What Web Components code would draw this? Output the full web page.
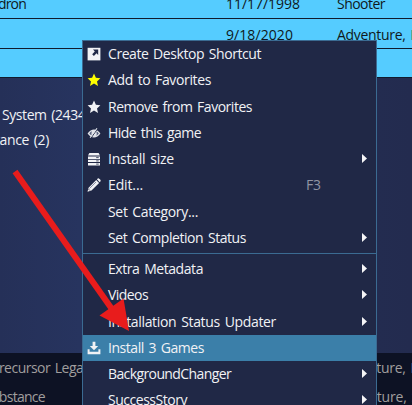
<!DOCTYPE html>
<html lang="en"><head><meta charset="utf-8"><title>Game library</title>
<style>body{margin:0;overflow:hidden;background:#253059}</style></head><body>
<library-app></library-app>
<script>
class FitText extends HTMLElement{
  constructor(){super();this.attachShadow({mode:'open'}).innerHTML=`<style>:host{display:block;white-space:pre;line-height:20px;flex:none;word-spacing:1.5px}span{display:inline-block}</style><span><slot></slot></span>`}
  connectedCallback(){
    const w=+this.getAttribute('w'),s=this.shadowRoot.querySelector('span');
    if(!w)return;
    const n=this.textContent.length,m=s.getBoundingClientRect().width;
    s.style.letterSpacing=((w-m)/n)+'px';
    this.style.width=w+'px';
  }
}
const star='<path d="M7 .4 8.9 4.8 13.4 5.3 10 8.4 11 13 7 10.6 3 13 4 8.4 .6 5.3 5.1 4.8Z" fill="currentColor"/>';
const icons={
 shortcut:'<path d="M.6 .8h12.8v12.6H.6z" fill="#f1f2f5"/><path d="M6 2.6h5.2v5.3L9.5 6.3 6.9 8.9 5.2 7.3 7.8 4.6Z" fill="#202846"/>',
 star,
 hide:'<path d="M.6 7.5Q3.5 3.4 7 3.4T13.4 7.5Q10.5 11.5 7 11.5T.6 7.5Z" fill="#e2e4ea"/><path d="M2.4 7.5Q3.4 5.8 4.8 5.2 4 7.6 5 9.6 3.3 9 2.4 7.5ZM9.3 5.2Q11 6 11.8 7.5 10.8 9 9.2 9.7 10.2 7.5 9.3 5.2Z" fill="#56607e"/><path d="M3.9 12.2 10.8 2.4" stroke="#202846" stroke-width="1"/><path d="M3.1 11.8 10 2.3" stroke="#e2e4ea" stroke-width="1.1"/>',
 server:'<path d="M2.4 1h9.2L13 3.6H1Z" fill="#f1f2f5"/><path d="M1 4.4h12v2.5H1zM1 7.7h12v2.4H1zM1 10.9h12v2.5H1z" fill="#f1f2f5"/><path d="M9.2 5.6h2.5M9.2 8.9h2.5M9.2 12.1h2.5" stroke="#202846" stroke-width=".8"/>',
 edit:'<path d="M.5 13.7 1.6 9.7 9.2 2 12.1 4.9 4.5 12.6ZM9.9 1.3 10.8.4Q11.6 0 12.5.9L13.4 1.8Q14 2.6 13.4 3.4L12.7 4.2Z" fill="#f1f2f5"/><path d="M2.6 10.4 9 4" stroke="#717994" stroke-width=".8"/><path d="M1.6 11.2l1.3 1.3" stroke="#202846" stroke-width=".8"/>',
 install:'<path d="M5.6 .8h2.8v4.2h2.8L7 9.2 2.8 5h2.8ZM.6 8.3h2V10.8h8.8V8.3h2v4.9H.6Z" fill="#f1f2f5"/>'
};
class MenuIcon extends HTMLElement{
  connectedCallback(){this.attachShadow({mode:'open'}).innerHTML=`<style>:host{display:block;width:14px;height:14px}svg{display:block}</style><svg width="14" height="14" viewBox="0 0 14 14">${icons[this.getAttribute('name')]||''}</svg>`}
}
class MenuItem extends HTMLElement{
  connectedCallback(){
    const a=n=>this.getAttribute(n);
    this.attachShadow({mode:'open'}).innerHTML=`<style>:host{display:grid;grid-template-columns:14px minmax(0,1fr) 14px 5px;align-items:center;box-sizing:border-box;height:26.25px;padding:0 9px 0 4px}
    :host([active]){background:#3b7fa9}fit-text{margin-left:7px;font-weight:500}.key{color:#9095a5;margin-left:-42px;font-weight:400}.tri{display:block;margin-bottom:1px}</style>
    <menu-icon name="${a('icon')||''}" style="color:${a('tint')||'#f1f2f5'}"></menu-icon><fit-text w="${a('w')}">${a('label')}</fit-text>
    <span>${a('key')?`<fit-text class="key" w="15">${a('key')}</fit-text>`:''}</span>${a('sub')!==null?'<svg class="tri" width="5" height="9" viewBox="0 0 5 9"><path d="M0 0 5 4.5 0 9Z" fill="#f5f5f7"/></svg>':''}`;
  }
}
class ContextMenu extends HTMLElement{
  constructor(){super();this.attachShadow({mode:'open'}).innerHTML=`<style>:host{display:block;box-sizing:border-box;background:#202846;border:1px solid #3b6b92;color:#f1f2f5}</style><slot></slot>`}
}
class MenuRule extends HTMLElement{
  constructor(){super();this.attachShadow({mode:'open'}).innerHTML='<style>:host{display:block;height:1px;background:#3b6b92;margin:2px 0 2px}</style>'}
}
class GameRow extends HTMLElement{
  connectedCallback(){
    const a=n=>this.getAttribute(n)||'';
    this.attachShadow({mode:'open'}).innerHTML=`<style>:host{display:grid;grid-template:100% / 226px 111px 75px;align-items:center;box-sizing:border-box;overflow:hidden}fit-text{justify-self:start}.n{margin-left:${a('shift')||0}px}</style>
    <fit-text class="n" w="${a('nw')}">${a('name')}</fit-text><fit-text w="${a('dw')}">${a('date')}</fit-text><fit-text w="${a('gw')}">${a('genre')}</fit-text>`;
  }
}
class LibraryApp extends HTMLElement{
  connectedCallback(){this.attachShadow({mode:'open'}).innerHTML=`<style>
  :host{display:flex;flex-direction:column;position:relative;width:412px;height:405px;overflow:hidden;font:14px "Open Sans","Noto Sans",sans-serif;background:#232c50}
  .list{color:#101820;flex:none}.list game-row{background:#55ccff;border-bottom:1px solid #101b2d}
  .r1{height:19px;padding-bottom:10px}.r2{height:30px;padding-top:2px}.r3{height:29px}
  .detail{flex:none;height:275px;background:linear-gradient(90deg,#253058 0,#27345f 80px,#232c50 377px,#232b4f);color:#f1f2f5;display:flex;flex-direction:column;gap:5px;padding-top:27px;box-sizing:border-box}
  .d1{margin-left:2px}.d2{margin-left:-5px}
  .dim{background:#0d1224;color:#a09e9e;height:52px}.dim game-row{height:29px}
  context-menu{position:absolute;left:82px;top:40px;width:295px;height:400px}
  .arrow{position:absolute;left:0;top:0}
  </style>
  <div class="list"><game-row class="r1" name="adron" shift="-9" nw="35" date="11/17/1998" dw="74" genre="Shooter" gw="48"></game-row><game-row class="r2" date="9/18/2020" dw="67" genre="Adventure, I" gw="77"></game-row><game-row class="r3"></game-row></div>
  <div class="detail"><fit-text class="d1" w="87">System (2434)</fit-text><fit-text class="d2" w="54">tance (2)</fit-text></div>
  <div class="dim"><game-row name="Precursor Legacy" shift="-9" nw="105" genre="Adventure, I" gw="77"></game-row><game-row name="ubstance" shift="-9" nw="54" genre="Adventure, S" gw="82"></game-row></div>
  <context-menu>
  <menu-item icon="shortcut" label="Create Desktop Shortcut" w="153"></menu-item>
  <menu-item icon="star" tint="#ffff00" label="Add to Favorites" w="103"></menu-item>
  <menu-item icon="star" label="Remove from Favorites" w="144"></menu-item>
  <menu-item icon="hide" label="Hide this game" w="93"></menu-item>
  <menu-item icon="server" label="Install size" w="66" sub></menu-item>
  <menu-item icon="edit" label="Edit..." w="35" key="F3"></menu-item>
  <menu-item label="Set Category..." w="90"></menu-item>
  <menu-item label="Set Completion Status" w="138" sub></menu-item>
  <menu-rule></menu-rule>
  <menu-item label="Extra Metadata" w="95" sub></menu-item>
  <menu-item label="Videos" w="40" sub></menu-item>
  <menu-item label="Installation Status Updater" w="168" sub></menu-item>
  <menu-item icon="install" label="Install 3 Games" w="96" active></menu-item>
  <menu-item label="BackgroundChanger" w="123" sub></menu-item>
  <menu-item label="SuccessStory" w="79" sub></menu-item>
  </context-menu>
  <svg class="arrow" width="412" height="405"><path d="M15 171.5 114 312" stroke="#e81c1c" stroke-width="6"/><path d="M129 331 99.5 315.5 123.5 298.5Z" fill="#e81c1c"/></svg>`}
}
for(const [n,c] of [['fit-text',FitText],['menu-icon',MenuIcon],['menu-item',MenuItem],['context-menu',ContextMenu],['menu-rule',MenuRule],['game-row',GameRow],['library-app',LibraryApp]])customElements.define(n,c);
</script></body></html>
